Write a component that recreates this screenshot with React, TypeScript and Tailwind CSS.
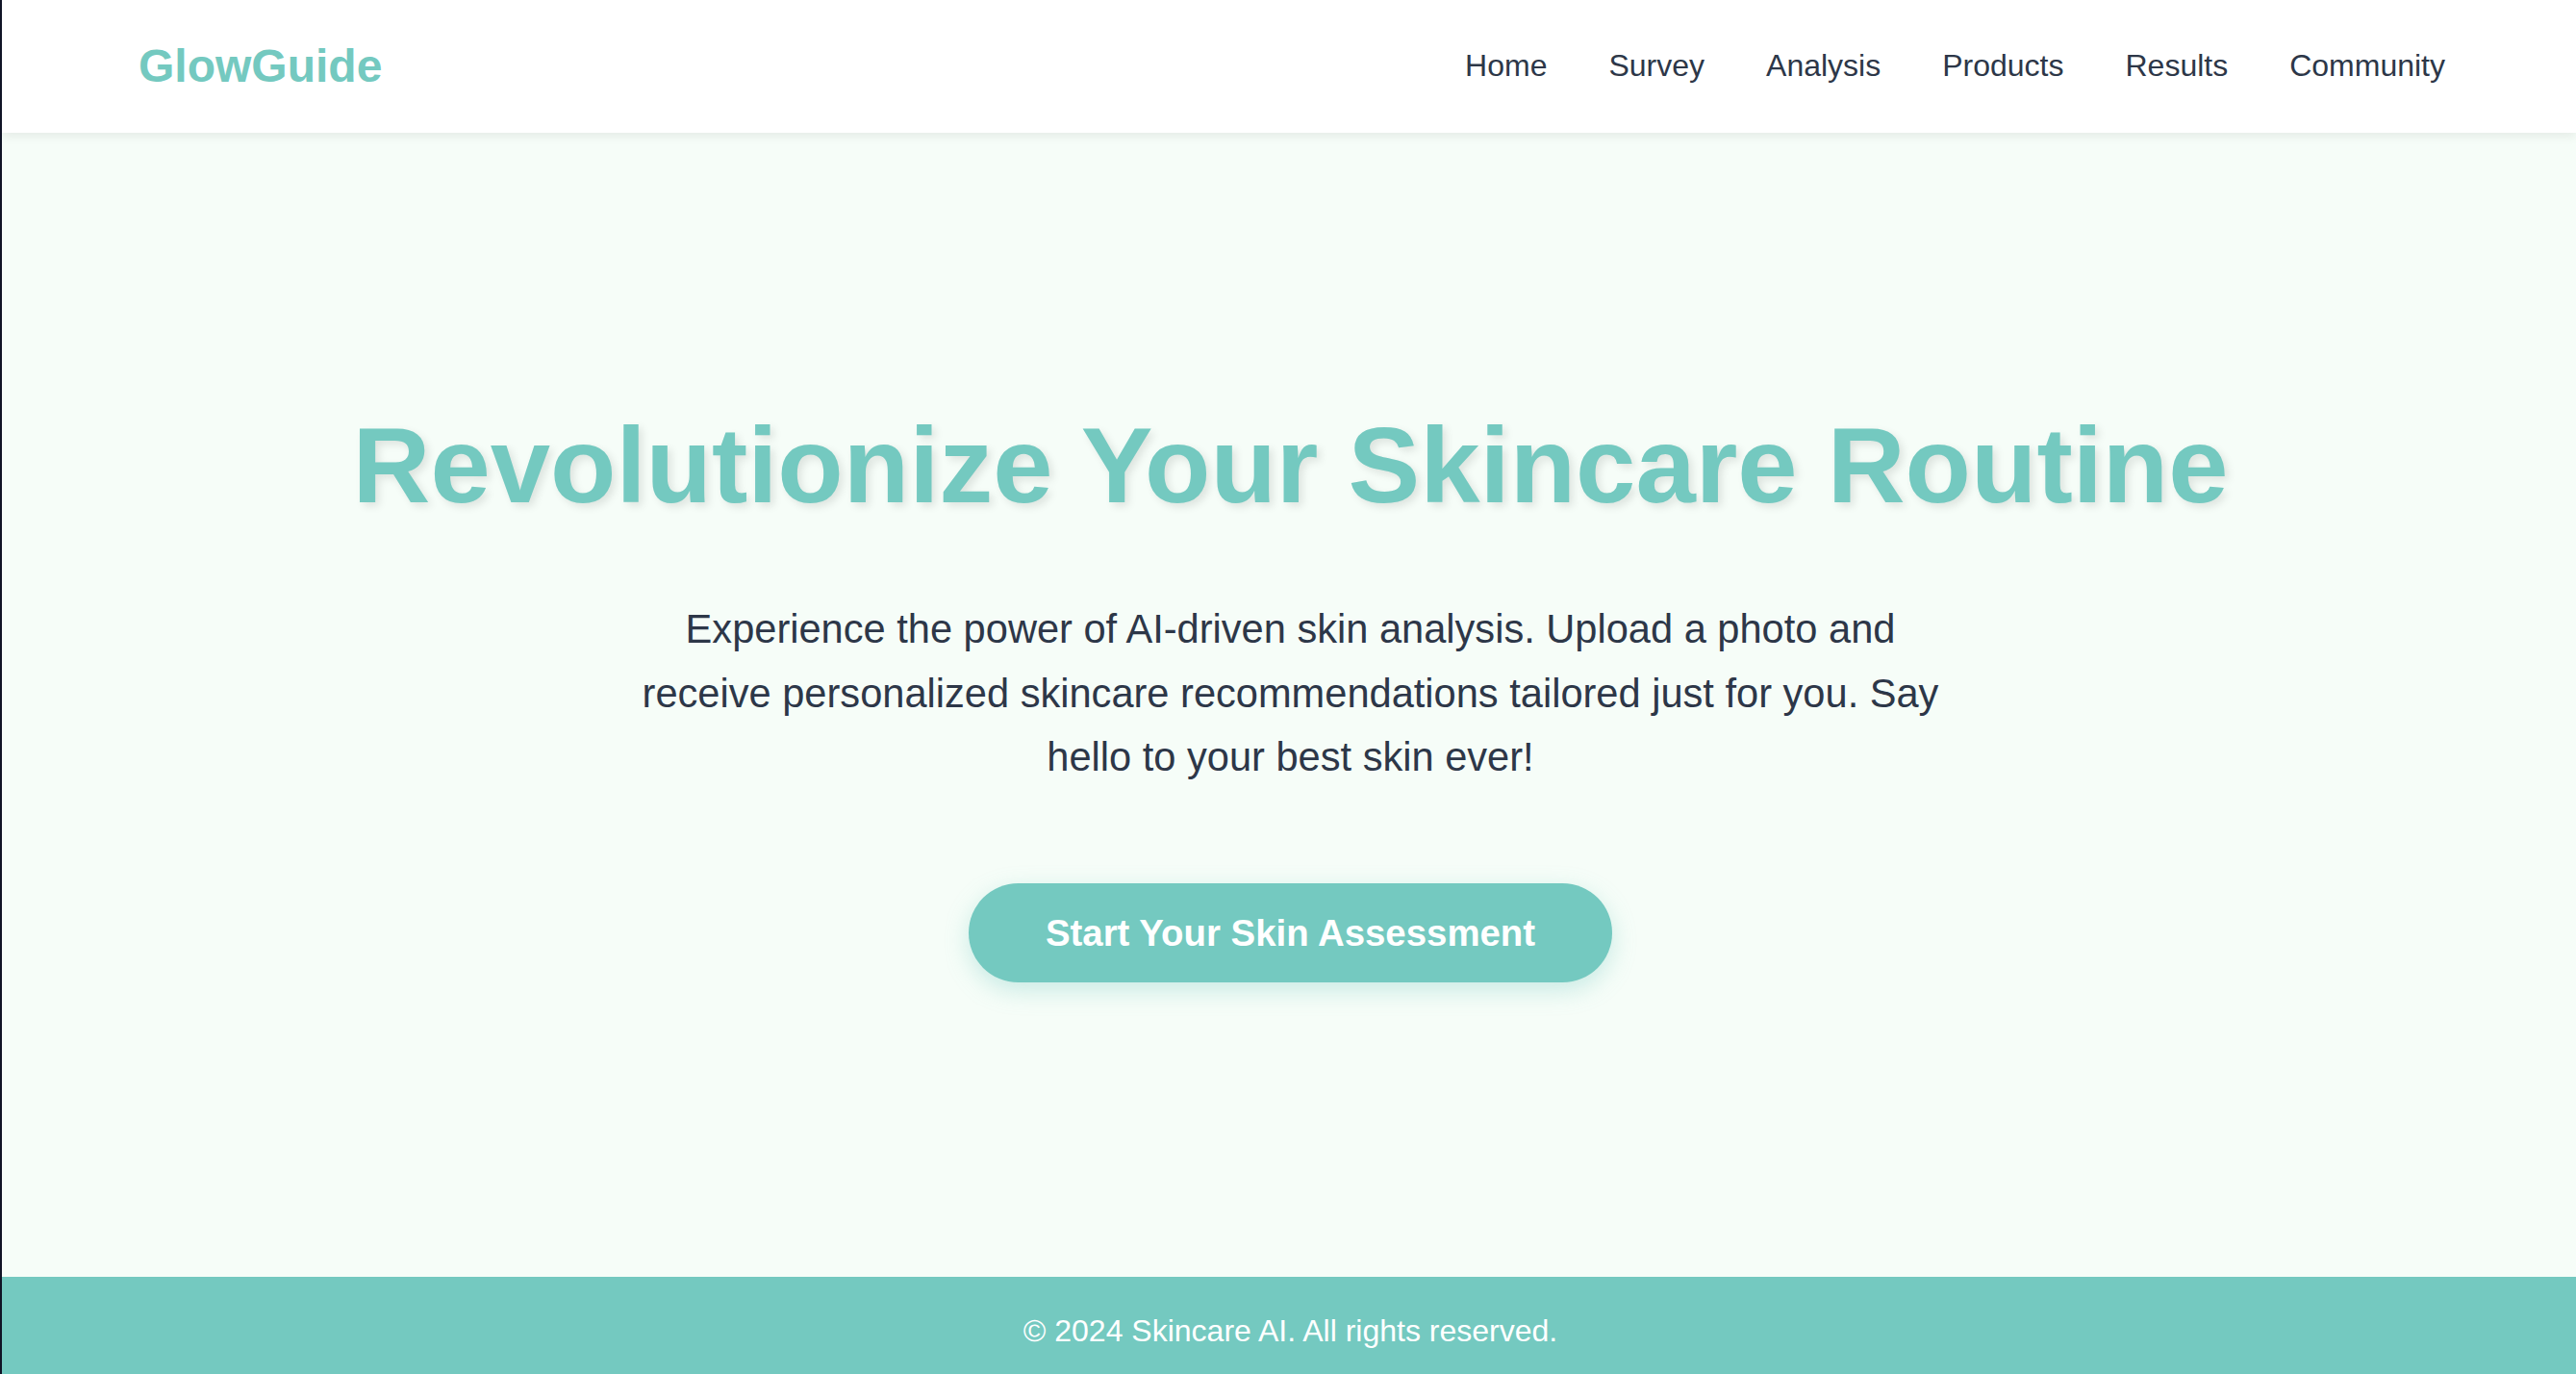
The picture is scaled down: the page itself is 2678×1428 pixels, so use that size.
const navLinks = ["Home", "Survey", "Analysis", "Products", "Results", "Community"];

function Header() {
  return (
    <header className="relative z-10 flex h-[138px] shrink-0 items-center justify-between bg-white pl-[142px] pr-[136px] shadow-[0_4px_10px_rgba(0,0,0,0.07)]">
      <div className="text-[48px] font-bold leading-[1.6] text-[#74c9c0]">GlowGuide</div>
      <nav className="flex items-center gap-16">
        {navLinks.map((link) => (
          <a key={link} href="#" className="text-[32px] leading-[1.6] text-[#2d3748]">
            {link}
          </a>
        ))}
      </nav>
    </header>
  );
}

export default function App() {
  return (
    <div className="flex h-[1428px] flex-col overflow-hidden border-l-2 border-[#101426] bg-[#f6fdf8] font-['Liberation_Sans',Arial,sans-serif]">
      <Header />

      {/* Hero */}
      <main className="flex flex-1 flex-col items-center pl-[3px] pt-[279px] text-center">
        <h1 className="mb-[70px] text-[112px] font-bold leading-[1.2] text-[#74c9c0] [text-shadow:4px_4px_8px_rgba(0,0,0,0.1)]">
          Revolutionize Your Skincare Routine
        </h1>
        <p className="mb-[97px] max-w-[1400px] text-[41.6px] leading-[1.6] text-[#2d3748]">
          Experience the power of AI-driven skin analysis. Upload a photo and receive personalized skincare
          recommendations tailored just for you. Say hello to your best skin ever!
        </p>
        <button className="rounded-full bg-[#74c9c0] px-[80px] py-[21px] text-[38.4px] font-bold leading-[1.6] text-white shadow-[0_8px_24px_rgba(116,201,192,0.35)]">
          Start Your Skin Assessment
        </button>
      </main>

      <footer className="h-[101px] shrink-0 bg-[#74c9c0] pl-[3px] pt-[31px] text-center text-[32px] leading-[1.6] text-white">
        © 2024 Skincare AI. All rights reserved.
      </footer>
    </div>
  );
}
